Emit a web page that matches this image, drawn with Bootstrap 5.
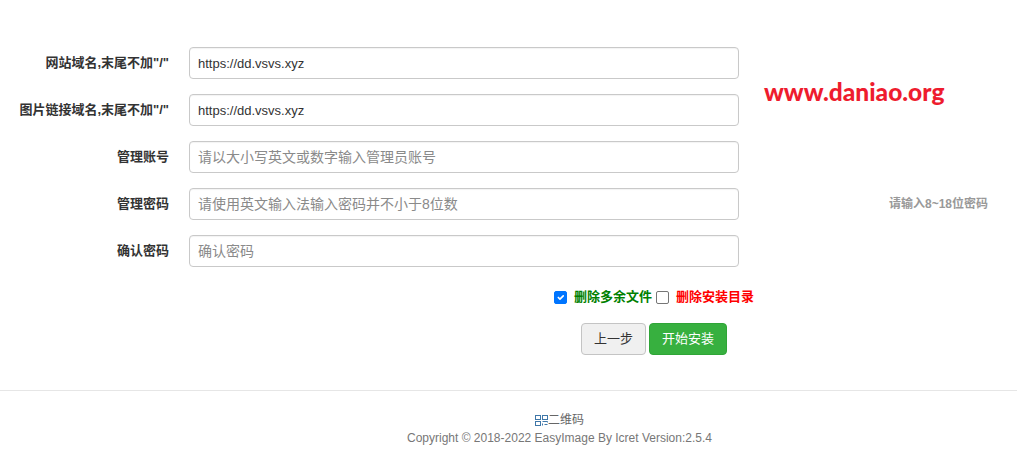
<!DOCTYPE html>
<html lang="zh">
<head>
<meta charset="utf-8">
<title>EasyImage</title>
<link rel="stylesheet" href="https://cdn.jsdelivr.net/npm/bootstrap@5.3.0/dist/css/bootstrap.min.css">
<style>
html,body{height:452px;overflow:hidden}
body{font-family:"Liberation Sans","Noto Sans CJK SC",sans-serif;font-size:14px;color:#333;background:#fff}
.setup-form{padding:47px 29px 0 0}
.field-row{height:32px;margin-bottom:15px}
.field-label{width:169px;font-weight:700;text-align:right;font-size:13px;line-height:18px;margin:0;color:#333}
.field-box{width:550px;margin-left:20px;flex:none}
.field-box .form-control{height:32px;border:1px solid #c9c9c9;border-radius:4px;padding:0 8px;font-size:13px;color:#333;box-shadow:inset 0 1px 1px rgba(0,0,0,.05)}
.field-box .form-control::placeholder{color:#8a8a8a;font-size:14px}
.side-note{flex:1;font-weight:700;font-size:12px;color:#999;text-align:right}
.wm-text{flex:1;margin-left:25px;margin-bottom:36px;font-family:"Lato","Liberation Sans",sans-serif;font-weight:900;font-size:24.5px;color:#ee1c2e;line-height:1}
.opts-row{width:754px;height:20px;margin-top:20px;font-weight:700;font-size:13px}
.opts-row .form-check-input{width:13px;height:13px;margin:0;border:1px solid #767676;border-radius:2px}
.opts-row .form-check-input:checked{background-color:#0075ff;border-color:#0075ff}
.opt-keep{color:#008000;margin-left:7px;margin-right:4px}
.opt-del{color:#f00;margin-left:7px}
.acts-row{width:727px;margin-top:16px;gap:3px}
.btn-prev,.btn-go{height:32px;font-size:13px;border-radius:4px;padding:0;line-height:30px;white-space:nowrap}
.btn-prev{background:#f0f0f0;border:1px solid #c4c4c4;color:#333;width:65px}
.btn-go{background:#37b03f;border:1px solid #2fa537;color:#fff;width:78px}
.foot-area{margin-top:35px;border-top:1px solid #e6e6e6;padding:20px 0 0 102px;text-align:center;font-size:12px;color:#777;line-height:18px}
.qr-link{height:18px;color:#666;display:flex;justify-content:center;align-items:center;font-size:12px}
.qr-link svg{display:block}
</style>
</head>
<body>
<form class="setup-form">
  <div class="d-flex align-items-center field-row">
    <label class="field-label">网站域名,末尾不加"/"</label>
    <div class="field-box"><input class="form-control" value="https://dd.vsvs.xyz"></div>
  </div>
  <div class="d-flex align-items-center field-row">
    <label class="field-label">图片链接域名,末尾不加"/"</label>
    <div class="field-box"><input class="form-control" value="https://dd.vsvs.xyz"></div>
    <div class="wm-text">www.daniao.org</div>
  </div>
  <div class="d-flex align-items-center field-row">
    <label class="field-label">管理账号</label>
    <div class="field-box"><input class="form-control" placeholder="请以大小写英文或数字输入管理员账号"></div>
  </div>
  <div class="d-flex align-items-center field-row">
    <label class="field-label">管理密码</label>
    <div class="field-box"><input class="form-control" type="password" placeholder="请使用英文输入法输入密码并不小于8位数"></div>
    <div class="side-note">请输入8~18位密码</div>
  </div>
  <div class="d-flex align-items-center field-row">
    <label class="field-label">确认密码</label>
    <div class="field-box"><input class="form-control" type="password" placeholder="确认密码"></div>
  </div>
  <div class="d-flex align-items-center justify-content-end opts-row">
    <input class="form-check-input" type="checkbox" checked>
    <span class="opt-keep">删除多余文件</span>
    <input class="form-check-input" type="checkbox">
    <span class="opt-del">删除安装目录</span>
  </div>
  <div class="d-flex justify-content-end acts-row">
    <button type="button" class="btn btn-prev">上一步</button>
    <button type="button" class="btn btn-go">开始安装</button>
  </div>
</form>
<footer class="foot-area">
  <div class="qr-link"><svg width="13" height="12" viewBox="0 0 13 12" fill="none" stroke="#3f77a8" stroke-width="1"><rect x=".5" y="1.500" width="5" height="4"/><rect x="7.500" y="1.500" width="5" height="4"/><rect x=".5" y="7.500" width="5" height="4"/><path d="M7.500 7.500h5v1M7.500 9.500v2M9.500 10.500h3"/></svg>二维码</div>
  <div>Copyright © 2018-2022 EasyImage By Icret Version:2.5.4</div>
</footer>
<script src="https://cdn.jsdelivr.net/npm/bootstrap@5.3.0/dist/js/bootstrap.bundle.min.js"></script>
</body>
</html>
